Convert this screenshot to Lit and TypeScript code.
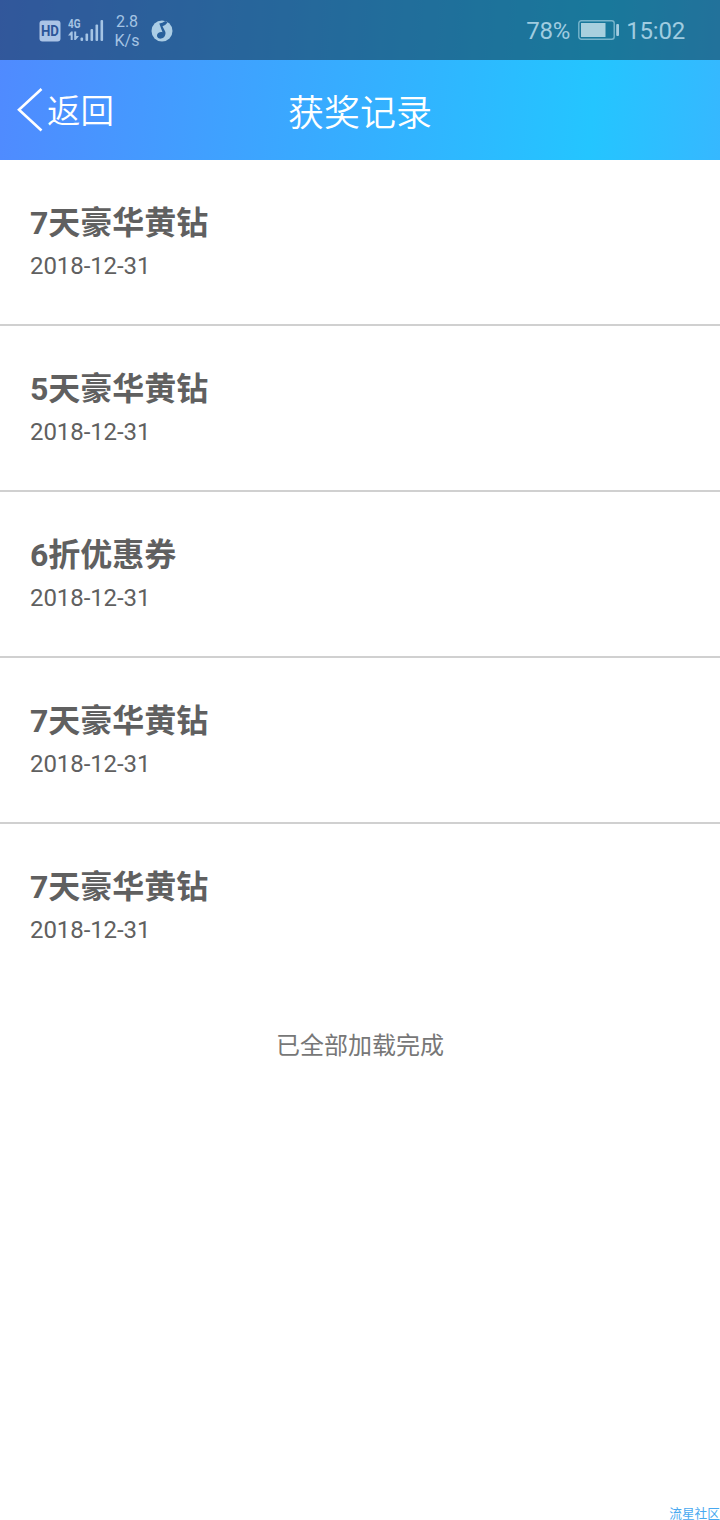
import { LitElement, html, css } from "lit";
import { customElement, property } from "lit/decorators.js";

@customElement("status-bar")
class StatusBar extends LitElement {
  static styles = css`
    :host {
      display: flex;
      justify-content: space-between;
      box-sizing: border-box;
      height: 60px;
      padding: 0 35px 0 39px;
      background: rgba(11, 22, 28, 0.44);
      color: #a0cce0;
      font-family: Roboto, sans-serif;
    }
    .group { display: flex; align-items: center; }
    .left { color: #a5c4e4; }
    .left > svg { margin-top: 2px; }
    .speed {
      font-size: 16px;
      line-height: 19px;
      width: 26px;
      margin: 1px 11px 0 10px;
      text-align: center;
      white-space: nowrap;
    }
    .left > .signal { margin: 0 0 0 7px; }
    .big { font-size: 24px; line-height: 28px; padding-top: 2px; letter-spacing: -0.2px; }
    .battery { margin: 0 6px 0 8px; }
    svg { display: block; }
    .net { font: 700 12px Roboto, sans-serif; }
    .hd { font: 700 14px Roboto, sans-serif; }
  `;
  render() {
    return html`
      <div class="group left">
        <svg width="22" height="22" viewBox="0 0 22 22">
          <rect x="0.5" y="0.5" width="21" height="21" rx="3" fill="#abc4e6" />
          <text class="hd" x="11" y="16" text-anchor="middle" textLength="18" lengthAdjust="spacingAndGlyphs" fill="#2c5598">HD</text>
        </svg>
        <svg class="signal" width="36" height="26" viewBox="0 0 36 26" fill="currentColor">
          <text class="net" x="0" y="11" textLength="12.5" lengthAdjust="spacingAndGlyphs">4G</text>
          <path d="M0 18.500L3.200 14.500H4.700V23H2.700V18.500zM6.200 14.500H8.200V19H11L7.700 23H6.200z" />
          <rect x="12.500" y="20.500" width="2.600" height="3.500" rx="1" />
          <rect x="17.500" y="16.500" width="2.600" height="7.500" rx="1" />
          <rect x="22.500" y="12" width="2.600" height="12" rx="1" />
          <rect x="27.500" y="7.500" width="2.600" height="16.500" rx="1" />
          <rect x="32.500" y="3" width="2.600" height="21" rx="1" />
        </svg>
        <div class="speed"><div>2.8</div><div>K/s</div></div>
        <svg width="22" height="22" viewBox="0 0 22 22">
          <circle cx="11" cy="11" r="10.500" fill="#abcde5" />
          <path d="M8.300 3.600Q11.300 3 14.300 0.900L16.600 2.400Q14.500 5.200 11.500 6.300L14.200 11.500C15.300 14.200 13.500 18.200 10 18.600C7.200 18.900 5.400 16.800 6.200 14.500C6.900 12.500 9.100 11.600 11.500 12.200z" fill="#28609c" />
        </svg>
      </div>
      <div class="group">
        <span class="big">78%</span>
        <svg class="battery" width="42" height="20" viewBox="0 0 42 20">
          <rect x="0.800" y="0.800" width="35.400" height="18.400" rx="2.500" fill="none" stroke="#78b5cc" stroke-width="1.400" />
          <rect x="3" y="3" width="24.500" height="14" fill="#a9d0de" />
          <rect x="38.200" y="4" width="2.800" height="12" rx="1" fill="#a3cce0" />
        </svg>
        <span class="big">15:02</span>
      </div>
    `;
  }
}

@customElement("nav-header")
class NavHeader extends LitElement {
  static styles = css`
    :host {
      display: grid;
      grid-template-columns: 1fr auto 1fr;
      align-items: center;
      box-sizing: border-box;
      height: 100px;
      padding: 0 17px;
      color: #fff;
      font-weight: 350;
    }
    .back { display: flex; align-items: center; font-size: 33.5px; line-height: 48px; }
    .back span { padding-top: 4px; }
    .back svg { display: block; margin-right: 4px; }
    .title { font-size: 36px; line-height: 52px; padding-top: 8px; }
  `;
  render() {
    return html`
      <div class="back">
        <svg width="26" height="46" viewBox="0 0 26 46">
          <path d="M24.500 2L2 22.700L24.500 43.500" fill="none" stroke="#fff" stroke-width="2.600" />
        </svg>
        <span>返回</span>
      </div>
      <div class="title">获奖记录</div>
    `;
  }
}

@customElement("prize-row")
class PrizeRow extends LitElement {
  @property() name = "";
  @property() date = "";
  static styles = css`
    :host {
      display: block;
      box-sizing: border-box;
      height: 166px;
      padding: 39px 30px 0;
      border-bottom: 2px solid #d0d0d0;
      color: #606060;
    }
    :host(:last-of-type) { border-bottom-color: transparent; }
    .name { font-size: 32px; font-weight: 700; line-height: 48px; }
    .date { font-size: 24px; line-height: 36px; margin-top: 1px; letter-spacing: -0.08px; }
  `;
  render() {
    return html`<div class="name">${this.name}</div><div class="date">${this.date}</div>`;
  }
}

@customElement("app-root")
class AppRoot extends LitElement {
  static styles = css`
    :host {
      display: flex;
      flex-direction: column;
      height: 1520px;
      background: #fff;
      font-family: Roboto, "Noto Sans CJK SC", sans-serif;
    }
    .top {
      background: linear-gradient(95deg, #508aff 0%, #40a0ff 30%, #24c5ff 82%, #36b8ff 100%);
    }
    .done {
      margin-top: 38px;
      text-align: center;
      font-size: 24px;
      line-height: 36px;
      color: #777;
    }
    .mark {
      margin-top: auto;
      align-self: flex-end;
      font-size: 12.7px;
      line-height: 12px;
      color: #48a9f0;
      white-space: nowrap;
    }
  `;
  private prizes = ["7天豪华黄钻", "5天豪华黄钻", "6折优惠券", "7天豪华黄钻", "7天豪华黄钻"];
  render() {
    return html`
      <div class="top">
        <status-bar></status-bar>
        <nav-header></nav-header>
      </div>
      <div>
        ${this.prizes.map((p) => html`<prize-row .name=${p} .date=${"2018-12-31"}></prize-row>`)}
      </div>
      <div class="done">已全部加载完成</div>
      <div class="mark">流星社区</div>
    `;
  }
}
